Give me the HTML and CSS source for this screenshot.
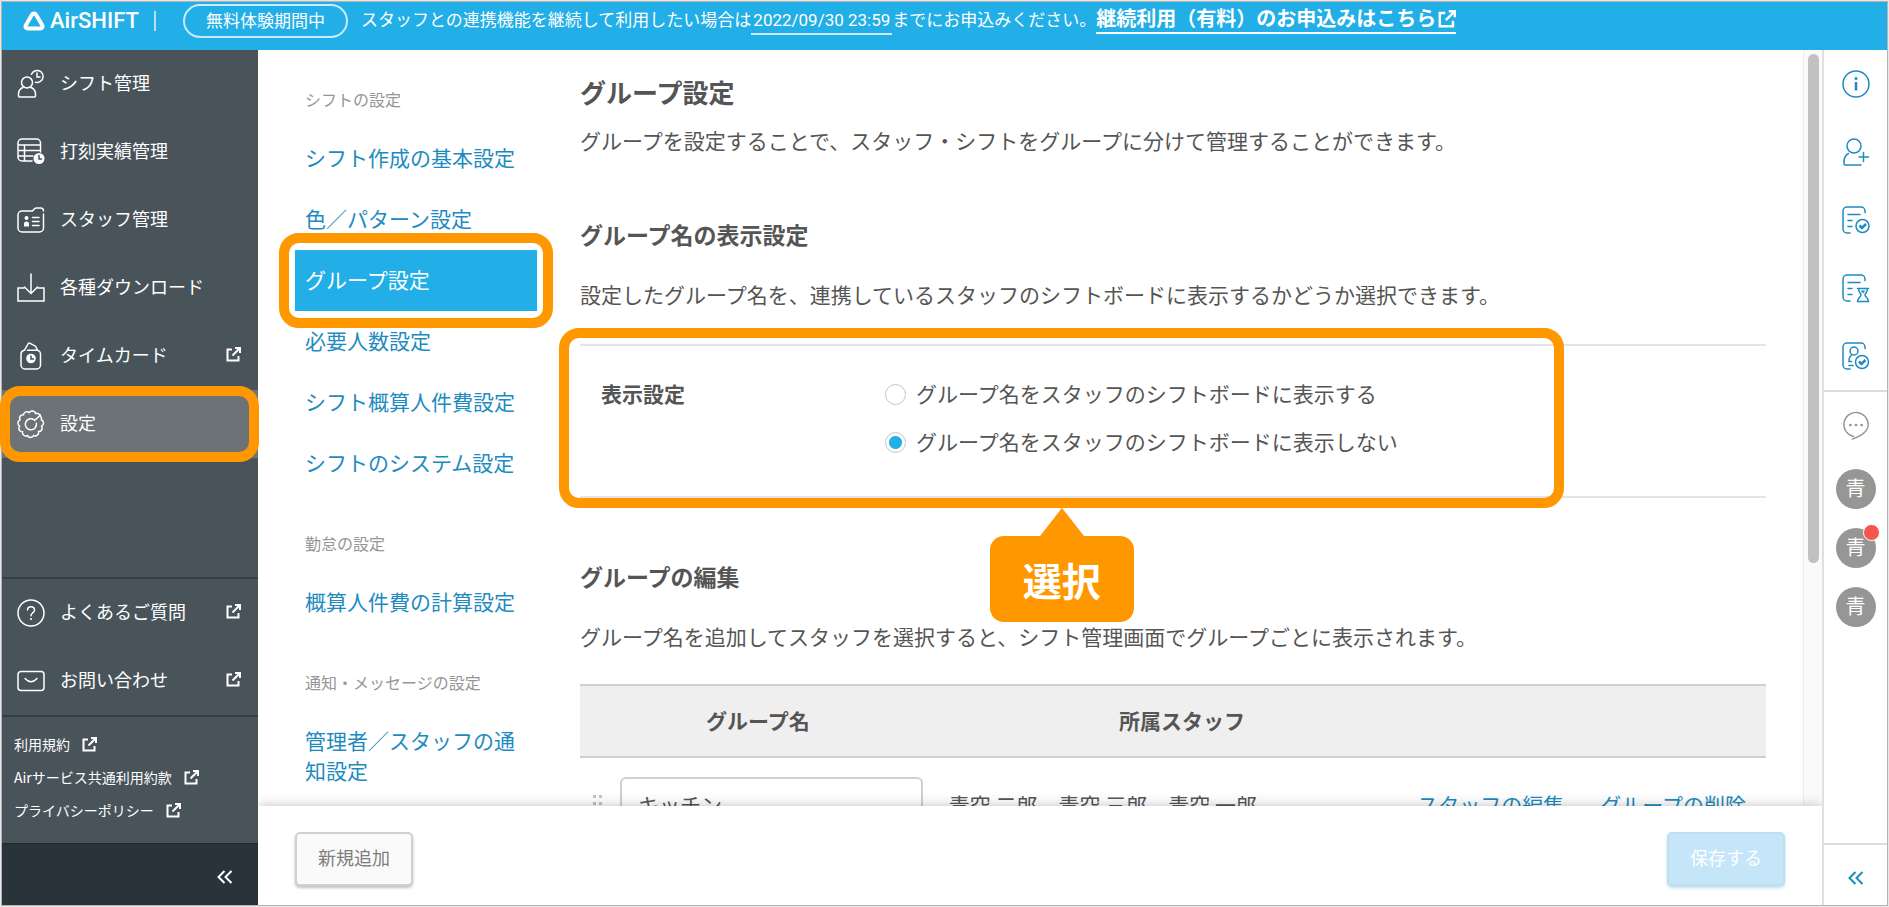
FILE: index.html
```html
<!DOCTYPE html>
<html lang="ja">
<head>
  <meta charset="utf-8">
  <title>グループ設定 | AirSHIFT</title>
  <link rel="stylesheet" href="styles.css">
</head>
<body>
<svg class="defs" aria-hidden="true">
  <symbol id="ext" viewBox="0 0 15 15">
    <path d="M6 2.500H1.500v11h11V9M9 1h5v5M13.500 1.500L6.500 8.500"/>
  </symbol>
  <symbol id="collapse" viewBox="0 0 16 14">
    <path d="M7.500 1L1.500 7l6 6M14.500 1l-6 6 6 6"/>
  </symbol>
  <symbol id="doc" viewBox="0 0 28 28">
    <path d="M23 6.500V5a4 4 0 0 0-4-4H5a4 4 0 0 0-4 4v18a4 4 0 0 0 4 4h3M6 8.500h12M6 14.500h4M6 20.500h4"/>
  </symbol>
</svg>
<div class="app">
  <header class="header">
    <a href="#" class="logo">
      <svg width="22" height="20" viewBox="0 0 22 20"><path d="M11 2.500c1 0 1.700.5 2.200 1.400l5.900 10.200c1 1.800 0 3.400-1.900 3.400H4.800c-1.900 0-2.900-1.600-1.900-3.400L8.800 3.900c.5-.9 1.200-1.400 2.200-1.400z"/></svg>
      <span>AirSHIFT</span>
    </a>
    <span class="trial">無料体験期間中</span>
    <p class="notice">スタッフとの連携機能を継続して利用したい場合は<span class="date">2022/09/30 23:59</span>までにお申込みください。<a href="#" class="apply">継続利用（有料）のお申込みはこちら<svg width="18" height="18"><use href="#ext"/></svg></a></p>
  </header>

  <nav class="sidebar">
    <ul class="menu">
      <li><a href="#">
        <svg class="icon" viewBox="0 0 28 28"><circle cx="10" cy="12.500" r="5.500"/><path d="M6 17.500c-3 1-4.500 3.500-4.500 7V26q0 1 1 1h15q1 0 1-1v-1.500c0-3.500-1.500-6-4.500-7M14.500 4.200A6 6 0 1 1 18.500 12.200M20 3v4h3"/></svg>
        シフト管理</a></li>
      <li><a href="#">
        <svg class="icon" viewBox="0 0 28 28"><path d="M23.500 14V5a4 4 0 0 0-4-4H5a4 4 0 0 0-4 4v14a4 4 0 0 0 4 4h10M1 7h22.500M1 12.500h22M1 18h15M7.500 7v16"/><circle cx="22" cy="20.500" r="5.500" class="solid"/><path class="hand" d="M22 17.500V21h2.500"/></svg>
        打刻実績管理</a></li>
      <li><a href="#">
        <svg class="icon" viewBox="0 0 28 28"><path d="M26.500 8v14a4 4 0 0 1-4 4H5a4 4 0 0 1-4-4V9a4 4 0 0 1 4-4h10.500l2-2.200q.8-.8 2-.8h4q3 0 3 3M15.500 11.500h6.500M15.500 15.500h6.500M15.500 19.500h6.500"/><circle cx="9.500" cy="12" r="2" class="solid"/><path class="solid" d="M7 20.500v-3q0-2 2.500-2t2.500 2v3z"/></svg>
        スタッフ管理</a></li>
      <li><a href="#">
        <svg class="icon" viewBox="0 0 28 28"><path d="M7 14H1v13h26V14h-6M14 0v19M7.500 13l6.500 6.500 6.500-6.500"/></svg>
        各種ダウンロード</a></li>
      <li><a href="#">
        <svg class="icon" viewBox="0 0 28 28"><path d="M7 8.200a4 4 0 0 0-3 4V23a4 4 0 0 0 4 4h11.500a4 4 0 0 0 4-4V12.200a4 4 0 0 0-4-4H10.500M7.500 8.200L11 2q.8-1.400 2.200-.6L18.500 4.200l2 4"/><circle cx="14" cy="16.500" r="4.800" class="solid"/><path class="hand" d="M14 14v3h2.500"/></svg>
        タイムカード<svg class="ext" width="15" height="15"><use href="#ext"/></svg></a></li>
      <li class="current"><a href="#">
        <svg class="icon" viewBox="0 0 28 28"><path d="M23 5.500a3.500 3.500 0 0 0-4.300-1.900 3.500 3.500 0 0 0-6.400-1 3.500 3.500 0 0 0-5.800 2.100 3.500 3.500 0 0 0-3.500 5.200 3.500 3.500 0 0 0-.4 6.200 3.500 3.500 0 0 0 2.900 5.700 3.500 3.500 0 0 0 5 3.800 3.500 3.500 0 0 0 6.200-.1 3.500 3.500 0 0 0 4.900-3.900 3.500 3.500 0 0 0 3-5.400 3.500 3.500 0 0 0-.3-6.400 3.500 3.500 0 0 0-.8-3.600M23.500 5l-6 5.500M17 9.600a5.600 5.600 0 1 0 2.400 3.600"/></svg>
        設定</a></li>
    </ul>
    <ul class="menu help">
      <li><a href="#">
        <svg class="icon" viewBox="0 0 28 28"><circle cx="14" cy="14" r="13"/><path d="M10.500 11c0-4.500 7-4.500 7 0 0 3-3.500 2.800-3.500 5.700"/><circle cx="14" cy="20" r="1" class="solid"/></svg>
        よくあるご質問<svg class="ext" width="15" height="15"><use href="#ext"/></svg></a></li>
      <li><a href="#">
        <svg class="icon" viewBox="0 0 28 28"><rect x="1" y="4.500" width="26" height="19" rx="3"/><path d="M8 11.500q6 6.500 12 0"/></svg>
        お問い合わせ<svg class="ext" width="15" height="15"><use href="#ext"/></svg></a></li>
    </ul>
    <ul class="legal">
      <li><a href="#">利用規約<svg class="ext" width="15" height="15"><use href="#ext"/></svg></a></li>
      <li><a href="#">Airサービス共通利用約款<svg class="ext" width="15" height="15"><use href="#ext"/></svg></a></li>
      <li><a href="#">プライバシーポリシー<svg class="ext" width="15" height="15"><use href="#ext"/></svg></a></li>
    </ul>
    <button class="collapse" aria-label="メニューを閉じる"><svg width="16" height="14"><use href="#collapse"/></svg></button>
  </nav>

  <main class="main">
    <div class="scroll">
      <nav class="settings">
        <h3>シフトの設定</h3>
        <ul>
          <li><a href="#">シフト作成の基本設定</a></li>
          <li><a href="#">色／パターン設定</a></li>
          <li class="current"><a href="#">グループ設定</a></li>
          <li><a href="#">必要人数設定</a></li>
          <li><a href="#">シフト概算人件費設定</a></li>
          <li><a href="#">シフトのシステム設定</a></li>
        </ul>
        <h3>勤怠の設定</h3>
        <ul>
          <li><a href="#">概算人件費の計算設定</a></li>
        </ul>
        <h3>通知・メッセージの設定</h3>
        <ul>
          <li><a href="#">管理者／スタッフの通知設定</a></li>
        </ul>
      </nav>

      <div class="content">
        <h1>グループ設定</h1>
        <p>グループを設定することで、スタッフ・シフトをグループに分けて管理することができます。</p>

        <h2>グループ名の表示設定</h2>
        <p>設定したグループ名を、連携しているスタッフのシフトボードに表示するかどうか選択できます。</p>
        <div class="display" role="radiogroup" aria-labelledby="display-label">
          <strong id="display-label">表示設定</strong>
          <div>
            <label><input type="radio" name="display">グループ名をスタッフのシフトボードに表示する</label>
            <label><input type="radio" name="display" checked>グループ名をスタッフのシフトボードに表示しない</label>
          </div>
          <div class="mark"><span class="balloon">選択</span></div>
        </div>

        <h2>グループの編集</h2>
        <p>グループ名を追加してスタッフを選択すると、シフト管理画面でグループごとに表示されます。</p>
        <table class="groups">
          <colgroup><col class="col-name"><col><col class="col-actions"></colgroup>
          <thead>
            <tr><th>グループ名</th><th class="staff">所属スタッフ</th><th></th></tr>
          </thead>
          <tbody>
            <tr>
              <td>
                <div class="name">
                  <svg class="grip" width="10" height="18" viewBox="0 0 10 18"><path d="M0 0h3v3H0zM6 0h3v3H6zM0 7h3v3H0zM6 7h3v3H6zM0 14h3v3H0zM6 14h3v3H6z"/></svg>
                  <input type="text" value="キッチン" aria-label="グループ名">
                </div>
              </td>
              <td>青空 二郎　青空 三郎　青空 一郎</td>
              <td class="actions"><a href="#">スタッフの編集</a><a href="#">グループの削除</a></td>
            </tr>
          </tbody>
        </table>
      </div>
      <div class="track"><div class="thumb"></div></div>
    </div>
    <footer class="footer">
      <button class="btn">新規追加</button>
      <button class="btn save" disabled>保存する</button>
    </footer>
  </main>

  <aside class="rail">
    <a href="#" aria-label="お知らせ"><svg class="icon" viewBox="0 0 28 28"><circle cx="14" cy="14" r="13"/><path class="bold" d="M14 12v8.500"/><circle cx="14" cy="8.500" r="1.500" class="solid"/></svg></a>
    <a href="#" aria-label="スタッフ追加"><svg class="icon" viewBox="0 0 28 28"><circle cx="12" cy="8" r="7"/><path d="M6.500 15.500C3.500 17 2 20 2 24v2q0 1 1 1h16M21.500 14.500v9M17 19h9.500"/></svg></a>
    <a href="#" aria-label="承認済み"><svg class="icon" viewBox="0 0 28 28"><use href="#doc"/><circle cx="20.500" cy="20" r="6.500"/><path class="bold" d="M17.500 19.500l2.500 2.500 4-4"/></svg></a>
    <a href="#" aria-label="承認待ち"><svg class="icon" viewBox="0 0 28 28"><use href="#doc"/><path d="M15.500 14.500h11M16.500 14.500c0 4 2.500 4.500 2.500 6.500s-3.500 3-3.500 6.500h11c0-3.500-3.500-4.500-3.500-6.500s2.500-2.500 2.500-6.500"/><path class="solid" d="M18.500 16.500h5L21 19.500z"/></svg></a>
    <a href="#" aria-label="スタッフ承認"><svg class="icon" viewBox="0 0 28 28"><path d="M23 6.500V5a4 4 0 0 0-4-4H5a4 4 0 0 0-4 4v18a4 4 0 0 0 4 4h3M9.500 13C7.500 14.500 7 16 7 19.500h2.500M7 23.500h4"/><circle cx="12" cy="9" r="4"/><circle cx="20" cy="20" r="6.500"/><path class="bold" d="M17 19.500l2.500 2.500 4-4"/></svg></a>
    <div class="chat">
      <a href="#" aria-label="メッセージ"><svg class="icon" viewBox="0 0 28 30"><path d="M10 29c9-3 17-8 17-15.500a13 13 0 1 0-15.500 12.700"/><circle cx="8" cy="14" r="1.500" class="solid"/><circle cx="14" cy="14" r="1.500" class="solid"/><circle cx="20" cy="14" r="1.500" class="solid"/></svg></a>
      <span class="avatar">青</span>
      <span class="avatar unread">青</span>
      <span class="avatar">青</span>
    </div>
    <button class="collapse" aria-label="閉じる"><svg width="16" height="14"><use href="#collapse"/></svg></button>
  </aside>
</div>
</body>
</html>
```
FILE: styles.css
```css
* {
    box-sizing: border-box;
}
body {
    margin: 0;
    padding: 1px;
    background: #e8e8e8;
    color: #555;
    font-family: "Noto Sans CJK JP", sans-serif;
    font-size: 21px;
    line-height: 32px;
}
h1, h2, h3, p, ul {
    margin: 0;
    padding: 0;
}
ul {
    list-style: none;
}
a {
    color: #1e8bc0;
    text-decoration: none;
}
button {
    font-family: inherit;
    cursor: pointer;
}
svg {
    fill: none;
    stroke: currentColor;
    stroke-width: 2;
    flex-shrink: 0;
}
.defs {
    display: none;
}
.icon {
    width: 28px;
    height: 28px;
    stroke-width: 1.5;
    stroke-linecap: round;
    overflow: visible;
}
.icon .solid {
    fill: currentColor;
    stroke: none;
}
.icon .hand {
    stroke: #48535a;
}
.icon .bold {
    stroke-width: 2.5;
    stroke-linecap: butt;
}
.app {
    display: grid;
    grid-template: 48px minmax(0, 1fr) / 256px minmax(0, 1fr) 65px;
    height: calc(100vh - 2px);
    border: 1px solid #b4b4b4;
    background: #fff;
}

/* header */
.header {
    grid-column: 1 / -1;
    display: flex;
    align-items: center;
    padding: 0 21px 10px;
    background: #22aee6;
    color: #fff;
    white-space: nowrap;
}
.header a {
    color: #fff;
}
.logo {
    display: flex;
    align-items: center;
    gap: 5px;
    height: 20px;
    width: 133px;
    margin-right: 27px;
    border-right: 2px solid #b4e1f6;
    font: 500 22px/20px Roboto, sans-serif;
}
.logo svg {
    stroke-width: 4;
}
.trial {
    width: 165px;
    margin-right: 13px;
    padding-bottom: 2px;
    border: 2px solid #c8eaf9;
    border-radius: 17px;
    font-size: 17px;
    line-height: 28px;
    text-align: center;
}
.notice {
    padding-bottom: 4px;
    font-size: 17px;
}
.date {
    padding: 0 2px 3px;
    border-bottom: 2px solid #c8eaf9;
    font-family: Roboto, sans-serif;
}
.apply {
    border-bottom: 2px solid #fff;
    font-size: 20px;
    font-weight: bold;
}
.apply svg {
    margin-left: 2px;
    vertical-align: -2px;
}

/* left menu */
.sidebar {
    display: flex;
    flex-direction: column;
    background: #48535a;
    font-size: 18px;
}
.sidebar a {
    display: flex;
    align-items: center;
    color: #fff;
}
.menu a {
    height: 68px;
    padding: 0 17px 4px 15px;
}
.menu .icon {
    margin: 4px 15px 0 0;
}
.menu .ext {
    margin-left: auto;
}
.menu .current {
    position: relative;
    background: #6c7276;
}
.menu .current::after {
    content: "";
    position: absolute;
    inset: -4px -1px -4px -2px;
    border: 10px solid #ff9800;
    border-radius: 20px;
}
.help {
    margin-top: auto;
    border: solid #343f45;
    border-width: 2px 0;
}
.legal {
    padding: 11px 12px 16px;
    font-size: 14px;
    line-height: 33px;
}
.legal .ext {
    margin-left: 12px;
}
.collapse {
    height: 62px;
    border: 0;
    border-top: 1px solid #20292e;
    background: #29343a;
    color: #fff;
    display: flex;
    align-items: center;
    justify-content: flex-end;
    padding: 5px 25px 0;
}

/* settings page */
.main {
    display: flex;
    flex-direction: column;
}
.scroll {
    flex: 1;
    min-height: 0;
    display: flex;
    overflow: hidden;
}
.settings {
    width: 242px;
    margin: 0 43px 0 37px;
    flex-shrink: 0;
}
.settings h3 {
    padding: 37px 10px 17px;
    color: #969696;
    font-size: 16px;
    font-weight: normal;
    line-height: 24px;
    white-space: nowrap;
}
.settings a {
    display: block;
    padding: 14px 10px 17px;
    line-height: 30px;
}
.settings .current {
    position: relative;
    background: #22aee6;
}
.settings .current a {
    color: #fff;
}
.settings .current::after {
    content: "";
    position: absolute;
    inset: -17px -16px;
    border: 10px solid #ff9800;
    border-radius: 20px;
}
.content {
    flex: 1;
    min-width: 0;
    padding-top: 24px;
    margin-right: 37px;
}
h1 {
    margin-bottom: 14px;
    font-size: 26px;
    line-height: 36px;
}
h2 {
    margin: 62px 0 28px;
    font-size: 23px;
    line-height: 32px;
}
.display {
    position: relative;
    display: flex;
    margin-top: 34px;
    padding: 23px 21px 31px;
    border: solid #e4e4e4;
    border-width: 2px 0;
    line-height: 48px;
}
.display strong {
    width: 284px;
}
.display label {
    display: flex;
    align-items: center;
    gap: 10px;
}
input[type=radio] {
    appearance: none;
    width: 21px;
    height: 21px;
    margin: 2px 0 0;
    border: 1px solid #c4c4c4;
    border-radius: 50%;
    background: #fff;
}
input[type=radio]:checked {
    background: radial-gradient(circle, #22aee6 6px, #fff 7px);
}
.mark {
    position: absolute;
    inset: -18px 17% -12px -21px;
    border: 10px solid #ff9800;
    border-radius: 20px;
    pointer-events: none;
}
.balloon {
    position: absolute;
    top: calc(100% + 38px);
    left: 50%;
    width: 144px;
    margin-left: -72px;
    border-radius: 14px;
    background: #ff9800;
    color: #fff;
    font-size: 39px;
    font-weight: bold;
    line-height: 86px;
    text-align: center;
}
.balloon::before {
    content: "";
    position: absolute;
    left: 50px;
    bottom: 100%;
    border: solid transparent;
    border-width: 0 22px 28px;
    border-bottom-color: #ff9800;
}
.groups {
    width: 100%;
    margin-top: 32px;
    border-collapse: collapse;
    table-layout: fixed;
}
.col-name {
    width: 30%;
}
.col-actions {
    width: 350px;
}
.groups th {
    height: 72px;
    padding: 0 0 3px;
    border: solid #d0d0d0;
    border-width: 2px 0;
    background: #efefef;
}
.groups .staff {
    padding-left: 12px;
}
.groups td {
    padding: 19px 13px;
    white-space: nowrap;
}
.name {
    display: flex;
    align-items: center;
    gap: 17px;
}
.grip {
    fill: #c4c4c4;
    stroke: none;
}
.name input {
    flex: 1;
    min-width: 0;
    height: 54px;
    padding: 0 16px;
    border: 2px solid #d0d0d0;
    border-radius: 6px;
    color: inherit;
    font: inherit;
}
.groups .actions {
    padding: 0 20px 0 0;
    text-align: right;
}
.actions a + a {
    margin-left: 36px;
}
.track {
    width: 19px;
    padding: 4px;
    border-left: 1px solid #ececec;
    background: #fafafa;
}
.thumb {
    width: 11px;
    height: 68%;
    border-radius: 6px;
    background: #c1c1c1;
}
.footer {
    position: relative;
    display: flex;
    justify-content: space-between;
    padding: 26px 37px 19px;
    background: #fff;
    box-shadow: 0 0 12px rgba(0, 0, 0, .25);
    clip-path: inset(-20px 0 0);
}
.btn {
    width: 118px;
    height: 54px;
    padding: 0 0 4px;
    border: 2px solid #d0d0d0;
    border-radius: 5px;
    background: #fafafa;
    box-shadow: 0 2px 3px rgba(0, 0, 0, .25);
    color: #7d7d7d;
    font-size: 18px;
}
.save {
    border-color: #bcdff2;
    background: #c5e6f8;
    box-shadow: 0 2px 3px rgba(60, 140, 180, .3);
    color: #fff;
}

/* right icons */
.rail {
    display: flex;
    flex-direction: column;
    border-left: 2px solid #e0e0e0;
}
.rail a {
    display: flex;
    height: 68px;
    align-items: center;
    justify-content: center;
}
.chat {
    display: flex;
    flex-direction: column;
    align-items: center;
    gap: 19px;
    border-top: 2px solid #dcdcdc;
}
.rail .chat a {
    height: 58px;
    padding-top: 9px;
    color: #969696;
}
.avatar {
    position: relative;
    width: 40px;
    height: 40px;
    border-radius: 50%;
    background: #969696;
    color: #fff;
    font-size: 20px;
    line-height: 37px;
    text-align: center;
}
.unread::after {
    content: "";
    position: absolute;
    top: -4px;
    right: -4px;
    width: 15px;
    height: 15px;
    border: 1px solid #fff;
    border-radius: 50%;
    background: #f5554f;
}
.rail .collapse {
    margin-top: auto;
    border-top: 2px solid #dcdcdc;
    background: #fff;
    color: #1e8bc0;
    justify-content: center;
}
```
